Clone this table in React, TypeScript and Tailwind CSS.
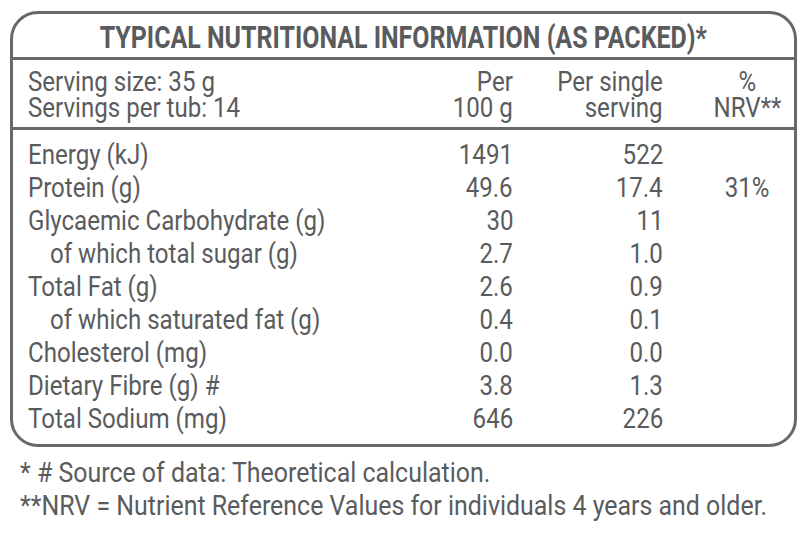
import React from 'react';

const ROWS: { label: string; per100: string; perServing: string; nrv?: string; indent?: boolean }[] = [
  { label: 'Energy (kJ)', per100: '1491', perServing: '522' },
  { label: 'Protein (g)', per100: '49.6', perServing: '17.4', nrv: '31%' },
  { label: 'Glycaemic Carbohydrate (g)', per100: '30', perServing: '11' },
  { label: 'of which total sugar (g)', per100: '2.7', perServing: '1.0', indent: true },
  { label: 'Total Fat (g)', per100: '2.6', perServing: '0.9' },
  { label: 'of which saturated fat (g)', per100: '0.4', perServing: '0.1', indent: true },
  { label: 'Cholesterol (mg)', per100: '0.0', perServing: '0.0' },
  { label: 'Dietary Fibre (g) #', per100: '3.8', perServing: '1.3' },
  { label: 'Total Sodium (mg)', per100: '646', perServing: '226' },
];

const GRID = 'grid grid-cols-[385px_100px_150px_131px]';

// condensed look: the print face is narrow, so squeeze the glyphs horizontally
function L({ children }: { children: React.ReactNode }) {
  return <span className="inline-block whitespace-nowrap scale-x-[0.86] origin-left">{children}</span>;
}
function R({ children }: { children: React.ReactNode }) {
  return <span className="inline-block whitespace-nowrap scale-x-[0.86] origin-right">{children}</span>;
}
function C({ children }: { children: React.ReactNode }) {
  return <span className="inline-block whitespace-nowrap scale-x-[0.86] origin-center">{children}</span>;
}

export default function App() {
  return (
    <div className="w-[806px] h-[533px] bg-white text-[#5a5b5d] font-['Roboto',sans-serif] overflow-hidden">
      <div className="pt-[11px] pl-[10px] pr-[9px]">
        <div className="border-[3px] border-[#67686a] rounded-[28px]">
          {/* title */}
          <div className="h-[46px] pt-[3px] flex items-center justify-center border-b-[3px] border-[#67686a] overflow-hidden">
            <h1 className="text-[32px] font-bold leading-none whitespace-nowrap scale-x-[0.78] origin-center shrink-0">
              TYPICAL NUTRITIONAL INFORMATION (AS PACKED)*
            </h1>
          </div>

          {/* header */}
          <div className={`${GRID} pl-[15px] pt-[9px] pb-[6px] border-b-[3px] border-[#67686a] text-[28px] leading-[26px]`}>
            <div>
              <div><L>Serving size: 35 g</L></div>
              <div><L>Servings per tub: 14</L></div>
            </div>
            <div className="text-right">
              <div><R>Per</R></div>
              <div><R>100 g</R></div>
            </div>
            <div className="text-right">
              <div><R>Per single</R></div>
              <div><R>serving</R></div>
            </div>
            <div className="text-center pl-[37px]">
              <div><C>%</C></div>
              <div><C>NRV**</C></div>
            </div>
          </div>

          {/* body */}
          <div className="pl-[15px] pt-[8px] pb-[9px] text-[28px] leading-[33px]">
            {ROWS.map(r => (
              <div key={r.label} className={GRID}>
                <div className={r.indent ? 'pl-[22px]' : ''}><L>{r.label}</L></div>
                <div className="text-right"><R>{r.per100}</R></div>
                <div className="text-right"><R>{r.perServing}</R></div>
                <div className="text-center pl-[37px]">{r.nrv ? <C>{r.nrv}</C> : ''}</div>
              </div>
            ))}
          </div>
        </div>
      </div>

      {/* footnotes */}
      <div className="mt-[9px] pl-[20px] text-[28px] leading-[33px]">
        <div><span className="inline-block whitespace-nowrap scale-x-[0.89] origin-left">* # Source of data: Theoretical calculation.</span></div>
        <div><span className="inline-block whitespace-nowrap scale-x-[0.89] origin-left">**NRV = Nutrient Reference Values for individuals 4 years and older.</span></div>
      </div>
    </div>
  );
}
